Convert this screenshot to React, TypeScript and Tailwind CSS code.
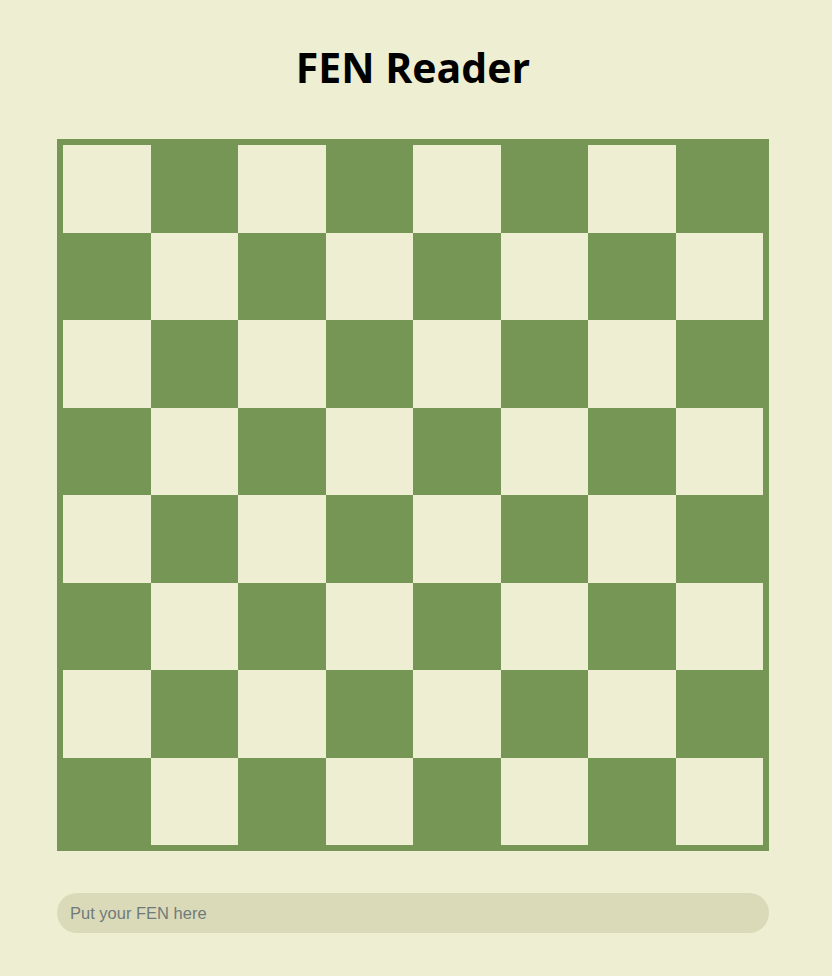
const files = ["a", "b", "c", "d", "e", "f", "g", "h"];
const ranks = [8, 7, 6, 5, 4, 3, 2, 1];

function Board() {
  return (
    <div className="grid w-[712px] grid-cols-8 border-[6px] border-[#769656] bg-[#769656]">
      {ranks.map((r, ri) =>
        files.map((f, fi) => (
          <div
            key={f + r}
            className={(ri + fi) % 2 === 0 ? "aspect-square bg-[#eeeed2]" : "aspect-square bg-[#769656]"}
          />
        )),
      )}
    </div>
  );
}

export default function App() {
  return (
    <div className="min-h-[976px] bg-[#eeeed2] pl-[57px]" style={{ fontFamily: '"Liberation Sans", Arial, sans-serif' }}>
      <div className="w-[712px]">
        <h1 className="pt-[35px] pb-[39px] text-center text-[41px] leading-[65px] font-bold text-black" style={{ fontFamily: '"Open Sans", "Noto Sans", sans-serif' }}>
          FEN Reader
        </h1>
        <Board />
        <input
          className="mt-[42px] h-10 w-full rounded-full bg-[#dadab9] px-[13px] text-[16.5px] text-gray-800 outline-none placeholder:text-[#6f7a7a]"
          placeholder="Put your FEN here"
        />
      </div>
    </div>
  );
}
